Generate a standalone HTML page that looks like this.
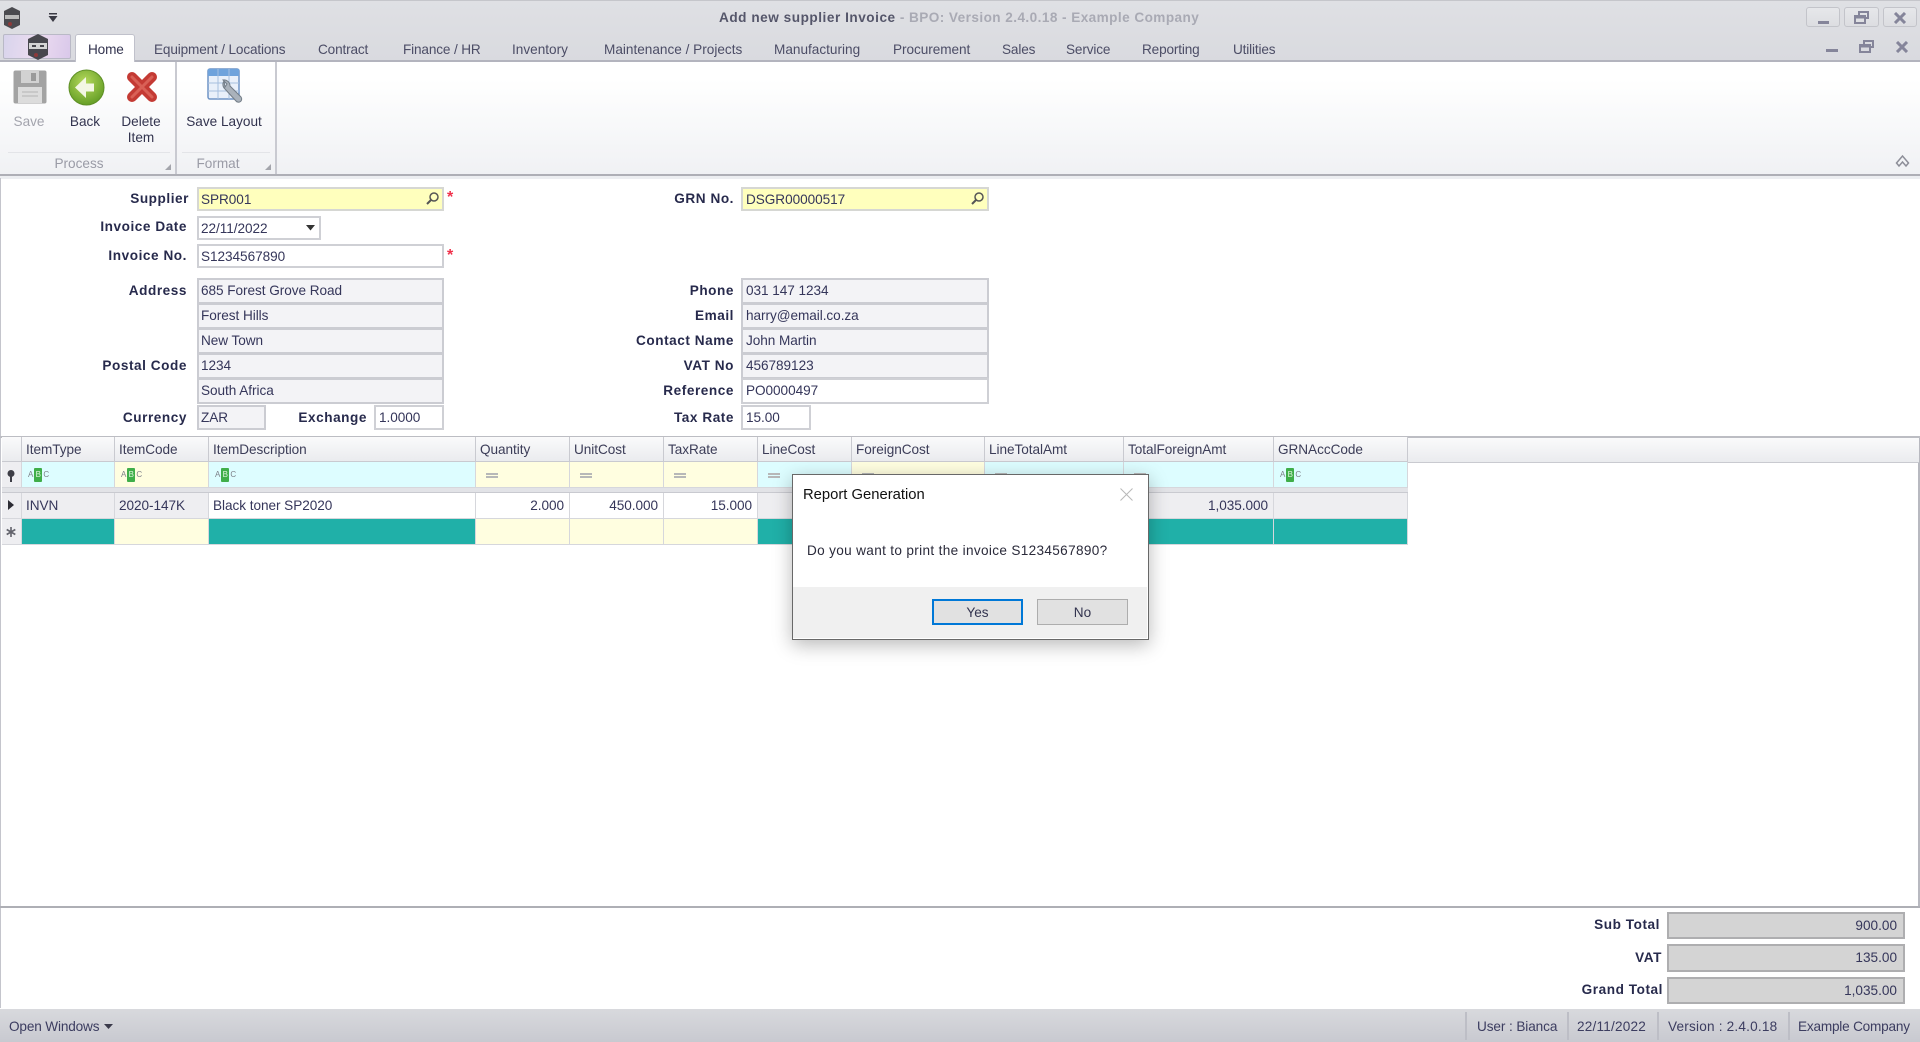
<!DOCTYPE html>
<html><head><meta charset="utf-8"><title>Add new supplier Invoice</title>
<style>
*{box-sizing:border-box}
html,body{margin:0;padding:0;width:1920px;height:1042px;overflow:hidden;background:#fff}
body{font-family:"Liberation Sans",sans-serif;font-size:13.6px;color:#33344f}
#root{position:absolute;left:0;top:0;width:1920px;height:1042px;overflow:hidden;filter:blur(.3px)}
.a{position:absolute}
.t{position:absolute;height:20px;line-height:20px;white-space:nowrap}
.c{transform:translateX(-50%)}
.tab{top:40px;color:#4c4d66;font-size:13.6px;letter-spacing:-.15px}
.lb{font-weight:bold;color:#272a4c;text-align:right;width:170px;letter-spacing:.55px;margin-top:1px}
.box{position:absolute;border:2px solid #cfd0d5;background:#fff;line-height:22px;padding-left:2px;white-space:nowrap;color:#35365a;letter-spacing:-.05px}
.ro{background:#f3f3f6;border-color:#cbccd2}
.y{background:#ffffbd;border-color:#d6d7d3}
.tot{position:absolute;left:1667px;width:238px;background:#d4d4d4;border:2px solid #aeaeb0;text-align:right;padding-right:6px;line-height:24px;color:#35365a}
table{position:absolute;left:2px;top:437px;border-collapse:separate;border-spacing:0;table-layout:fixed;width:1406px}
td{padding:0 4px;border-right:1.5px solid #d6d7dc;border-bottom:1.5px solid #d6d7dc;white-space:nowrap;overflow:hidden;color:#35365a}
tr.h td{height:25px;background:linear-gradient(#fafafb,#eaebee);color:#3c3d58;border-bottom-color:#c9cad0;border-right-color:#c9cad0;letter-spacing:-.05px}
tr.f td{height:26px}
tr.r td{height:26px;letter-spacing:-.05px}
.cy{background:#ddfdff}.ye{background:#fffee0}.gr{background:#eeeef1}.wh{background:#fff}.te{background:#20b0a8}
.n{text-align:right;padding-right:5px}
.abc{font-size:8px;color:#7d8088;letter-spacing:0;display:inline-block;line-height:14px;vertical-align:middle;margin-left:2px}
.abc b{display:inline-block;background:#3fae49;color:#dff5df;width:8px;height:14px;text-align:center;font-weight:normal;margin:0 1px;border-radius:1px}
.eq{display:inline-block;width:12px;height:5px;border-top:2px solid #b7b8b8;border-bottom:2px solid #b7b8b8;margin-left:6px;vertical-align:middle}
.wb{position:absolute;top:7px;height:20px;border:1.5px solid #c3c4ca;border-radius:3px;background:linear-gradient(#e6e7ea,#dcdde1)}
.sep{position:absolute;top:1012px;width:1.5px;height:28px;background:#bdbec6}
</style></head>
<body><div id="root">

<!-- title + tab strip -->
<div class="a" style="left:0;top:0;width:1920px;height:62px;background:linear-gradient(#dfe0e4,#d9dadf);border-top:1px solid #c5c6cb;border-bottom:2px solid #b3b4be"></div>

<svg class="a" style="left:2px;top:6px" width="20" height="24" viewBox="0 0 20 24"><path d="M10 1l8 4v14l-8 4-8-4V5z" fill="#4b4b50"/><path d="M3 9h14v4H3z" fill="#bbb"/><circle cx="8" cy="18" r="2" fill="#8d3a3a"/></svg>
<svg class="a" style="left:48px;top:12px" width="10" height="11" viewBox="0 0 10 11"><path d="M1 1h8v1.500H1z" fill="#3a3a44"/><path d="M0.500 4h9L5 10z" fill="#3a3a44"/></svg>

<div class="t" style="left:719px;top:8px;font-weight:bold;color:#55566a;font-size:13.6px;letter-spacing:.53px">Add new supplier Invoice<span style="color:#a9aab4;letter-spacing:.43px"> - BPO: Version 2.4.0.18 - Example Company</span></div>

<div class="wb" style="left:1806px;width:34px"></div>
<div class="wb" style="left:1844px;width:35px"></div>
<div class="wb" style="left:1883px;width:34px"></div>
<div class="a" style="left:1818px;top:21px;width:11px;height:3px;background:#85859a"></div>
<svg class="a" style="left:1854px;top:11px" width="15" height="14" viewBox="0 0 15 14" fill="none" stroke="#85859a" stroke-width="2"><path d="M5 4V1h9v6h-3"/><path d="M1 5h10v7H1z"/><path d="M1 6h10" stroke-width="3"/></svg>
<svg class="a" style="left:1893px;top:12px" width="14" height="12" viewBox="0 0 14 12" fill="none" stroke="#85859a" stroke-width="3"><path d="M2 1l10 10M12 1L2 11"/></svg>
<div class="a" style="left:1826px;top:49px;width:12px;height:3px;background:#85859a"></div>
<svg class="a" style="left:1859px;top:40px" width="15" height="14" viewBox="0 0 15 14" fill="none" stroke="#85859a" stroke-width="2"><path d="M5 4V1h9v6h-3"/><path d="M1 5h10v7H1z"/><path d="M1 6h10" stroke-width="3"/></svg>
<svg class="a" style="left:1895px;top:41px" width="14" height="12" viewBox="0 0 14 12" fill="none" stroke="#85859a" stroke-width="3"><path d="M2 1l10 10M12 1L2 11"/></svg>

<!-- logo button -->
<div class="a" style="left:3px;top:34px;width:68px;height:25px;border:1px solid #b9b9c6;border-radius:2px;background:linear-gradient(100deg,#d8d4ec,#ecdcf0 50%,#d9c8ea)"></div>
<svg class="a" style="left:26px;top:33px" width="24" height="28" viewBox="0 0 24 28"><path d="M12 1l10 5v16l-10 5-10-5V6z" fill="#48484e"/><path d="M3 10h18v6H3z" fill="#d5d5d5"/><path d="M6 12h4v2H6zM14 12h4v2h-4z" fill="#48484e"/><circle cx="10" cy="22" r="2" fill="#8d3a3a"/></svg>

<!-- tabs -->
<div class="a" style="left:75px;top:34px;width:60px;height:29px;background:#fff;border:1.5px solid #c0c1cb;border-bottom:none;border-radius:3px 3px 0 0"></div>
<div class="t tab" style="left:88px;color:#33344f">Home</div>
<div class="t tab" style="left:154px">Equipment / Locations</div>
<div class="t tab" style="left:318px">Contract</div>
<div class="t tab" style="left:403px">Finance / HR</div>
<div class="t tab" style="left:512px;letter-spacing:0">Inventory</div>
<div class="t tab" style="left:604px;letter-spacing:0">Maintenance / Projects</div>
<div class="t tab" style="left:774px;letter-spacing:0">Manufacturing</div>
<div class="t tab" style="left:893px;letter-spacing:-.05px">Procurement</div>
<div class="t tab" style="left:1002px">Sales</div>
<div class="t tab" style="left:1066px">Service</div>
<div class="t tab" style="left:1142px">Reporting</div>
<div class="t tab" style="left:1233px">Utilities</div>

<!-- ribbon -->
<div class="a" style="left:0;top:62px;width:1920px;height:112px;background:linear-gradient(#fff 0,#fff 15%,#f0f1f4 100%)"></div>
<div class="a" style="left:0;top:173.500px;width:1920px;height:2px;background:#aeafb6"></div>
<div class="a" style="left:0;top:175.500px;width:1920px;height:3px;background:#eceef1"></div>
<div class="a" style="left:175px;top:62px;width:1.500px;height:112px;background:#c9cad1"></div>
<div class="a" style="left:275px;top:62px;width:1.500px;height:112px;background:#c9cad1"></div>
<div class="a" style="left:8px;top:152px;width:162px;height:1px;background:#e3e4e8"></div>
<div class="a" style="left:182px;top:152px;width:88px;height:1px;background:#e3e4e8"></div>

<svg class="a" style="left:13px;top:70px" width="34" height="34" viewBox="0 0 34 34"><rect x="0.500" y="0.500" width="33" height="33" rx="2" fill="#a3a3a3"/><rect x="8" y="1" width="18" height="12" fill="#d2d2d2"/><rect x="18" y="3" width="5" height="8" fill="#9a9a9a"/><rect x="5" y="17" width="24" height="16" fill="#dcdcdc"/><path d="M9 22h16M9 26h16" stroke="#b5b5b5"/></svg>
<svg class="a" style="left:68px;top:69px" width="37" height="37" viewBox="0 0 37 37"><defs><radialGradient id="g" cx=".45" cy=".35" r=".7"><stop offset="0" stop-color="#b6d95c"/><stop offset="1" stop-color="#5f9a22"/></radialGradient></defs><circle cx="18.500" cy="18.500" r="17.500" fill="url(#g)" stroke="#5e8f26"/><path d="M7 18.500L18 8v6.500h8v8h-8V29z" fill="#f3f7e3"/></svg>
<svg class="a" style="left:126px;top:71px" width="32" height="32" viewBox="0 0 32 32"><path d="M6 6l20 20M26 6L6 26" stroke="#c43a34" stroke-width="10" stroke-linecap="round"/><path d="M6 6l20 20M26 6L6 26" stroke="#e87a6e" stroke-width="3" stroke-linecap="round" opacity=".6"/></svg>
<svg class="a" style="left:206px;top:67px" width="38" height="38" viewBox="0 0 38 38"><rect x="2" y="2" width="31" height="30" rx="2" fill="#e9f0fa" stroke="#6f94c6" stroke-width="1.500"/><rect x="2" y="2" width="31" height="7" fill="#6fa3dc"/><path d="M2 16h31M2 24h31M12 2v30M23 2v30" stroke="#a6bfdf"/><path d="M18 14a6 6 0 0 0 1 8l11 12a3 3 0 0 0 5-4L24 19a6 6 0 0 0-7-6l4 4-2 3z" fill="#aab2bb" stroke="#737d87"/></svg>

<div class="t c" style="left:29px;top:112px;color:#a3a4ad">Save</div>
<div class="t c" style="left:85px;top:112px">Back</div>
<div class="t c" style="left:141px;top:112px">Delete</div>
<div class="t c" style="left:141px;top:128px">Item</div>
<div class="t c" style="left:224px;top:112px">Save Layout</div>
<div class="t c" style="left:79px;top:154px;color:#9a9ba6">Process</div>
<div class="t c" style="left:218px;top:154px;color:#9a9ba6">Format</div>
<svg class="a" style="left:165px;top:164px" width="6" height="6"><path d="M6 0v6H0z" fill="#a4a5ac"/></svg>
<svg class="a" style="left:265px;top:164px" width="6" height="6"><path d="M6 0v6H0z" fill="#a4a5ac"/></svg>
<svg class="a" style="left:1895px;top:154px" width="15" height="14" viewBox="0 0 15 14" fill="none" stroke="#8d8e98" stroke-width="1.500"><path d="M1.500 9L7.500 2l6 7-2.500 3-3.500-4-3.500 4z"/></svg>

<!-- left frame -->
<div class="a" style="left:0;top:178px;width:1px;height:830px;background:#c4c5cc"></div>
<div class="a" style="left:1918px;top:437px;width:1.500px;height:470px;background:#b8b9c0"></div>

<!-- form left -->
<div class="t lb" style="left:19px;top:188px">Supplier</div>
<div class="box y" style="left:197px;top:187px;width:247px;height:24px">SPR001</div>
<svg class="a" style="left:425px;top:191px" width="15" height="15" viewBox="0 0 15 15" fill="none" stroke="#555" stroke-width="1.500"><circle cx="9" cy="6" r="4"/><path d="M6 9l-4 4" stroke-width="2"/></svg>
<div class="a" style="left:447px;top:190px;color:#f0304a;font-weight:bold;font-size:16px;line-height:16px">*</div>

<div class="t lb" style="left:17px;top:216px">Invoice Date</div>
<div class="box" style="left:197px;top:216px;width:124px;height:24px">22/11/2022</div>
<svg class="a" style="left:306px;top:225px" width="10" height="6"><path d="M0 0h9L4.500 5.500z" fill="#333"/></svg>

<div class="t lb" style="left:17px;top:245px">Invoice No.</div>
<div class="box" style="left:197px;top:244px;width:247px;height:24px">S1234567890</div>
<div class="a" style="left:447px;top:248px;color:#f0304a;font-weight:bold;font-size:16px;line-height:16px">*</div>

<div class="t lb" style="left:17px;top:280px">Address</div>
<div class="box ro" style="left:197px;top:278px;width:247px;height:26px">685 Forest Grove Road</div>
<div class="box ro" style="left:197px;top:303px;width:247px;height:26px">Forest Hills</div>
<div class="box ro" style="left:197px;top:328px;width:247px;height:26px">New Town</div>
<div class="t lb" style="left:17px;top:355px">Postal Code</div>
<div class="box ro" style="left:197px;top:353px;width:247px;height:26px">1234</div>
<div class="box ro" style="left:197px;top:378px;width:247px;height:26px">South Africa</div>
<div class="t lb" style="left:17px;top:407px">Currency</div>
<div class="box ro" style="left:197px;top:405px;width:69px;height:25px">ZAR</div>
<div class="t lb" style="left:197px;top:407px">Exchange</div>
<div class="box" style="left:374px;top:405px;width:70px;height:25px;padding-left:3px">1.0000</div>

<!-- form right -->
<div class="t lb" style="left:564px;top:188px">GRN No.</div>
<div class="box y" style="left:741px;top:187px;width:248px;height:24px;padding-left:3px">DSGR00000517</div>
<svg class="a" style="left:970px;top:191px" width="15" height="15" viewBox="0 0 15 15" fill="none" stroke="#555" stroke-width="1.500"><circle cx="9" cy="6" r="4"/><path d="M6 9l-4 4" stroke-width="2"/></svg>
<div class="t lb" style="left:564px;top:280px">Phone</div>
<div class="box ro" style="left:741px;top:278px;width:248px;height:26px;padding-left:3px">031 147 1234</div>
<div class="t lb" style="left:564px;top:305px">Email</div>
<div class="box ro" style="left:741px;top:303px;width:248px;height:26px;padding-left:3px">harry@email.co.za</div>
<div class="t lb" style="left:564px;top:330px">Contact Name</div>
<div class="box ro" style="left:741px;top:328px;width:248px;height:26px;padding-left:3px">John Martin</div>
<div class="t lb" style="left:564px;top:355px">VAT No</div>
<div class="box ro" style="left:741px;top:353px;width:248px;height:26px;padding-left:3px">456789123</div>
<div class="t lb" style="left:564px;top:380px">Reference</div>
<div class="box" style="left:741px;top:378px;width:248px;height:26px;padding-left:3px">PO0000497</div>
<div class="t lb" style="left:564px;top:407px">Tax Rate</div>
<div class="box" style="left:741px;top:405px;width:70px;height:25px;padding-left:3px">15.00</div>

<!-- grid -->
<div class="a" style="left:0;top:436px;width:1920px;height:2px;background:#bcbdc3"></div>
<div class="a" style="left:1407px;top:438px;width:512px;height:25px;background:linear-gradient(#fafafb,#eaebee);border-bottom:1.500px solid #c9cad0"></div>
<table>
<colgroup><col style="width:20px"><col style="width:93px"><col style="width:94px"><col style="width:267px"><col style="width:94px"><col style="width:94px"><col style="width:94px"><col style="width:94px"><col style="width:133px"><col style="width:139px"><col style="width:150px"><col style="width:134px"></colgroup>
<tr class="h"><td></td><td>ItemType</td><td>ItemCode</td><td>ItemDescription</td><td>Quantity</td><td>UnitCost</td><td>TaxRate</td><td>LineCost</td><td>ForeignCost</td><td>LineTotalAmt</td><td>TotalForeignAmt</td><td>GRNAccCode</td></tr>
<tr class="f"><td class="gr"></td>
<td class="cy"><span class="abc">A<b>B</b>C</span></td>
<td class="ye"><span class="abc">A<b>B</b>C</span></td>
<td class="cy"><span class="abc">A<b>B</b>C</span></td>
<td class="ye"><i class="eq"></i></td><td class="ye"><i class="eq"></i></td><td class="ye"><i class="eq"></i></td><td class="cy"><i class="eq"></i></td><td class="ye"><i class="eq"></i></td><td class="cy"><i class="eq"></i></td><td class="cy"><i class="eq"></i></td>
<td class="cy"><span class="abc">A<b>B</b>C</span></td></tr>
<tr><td colspan="12" style="height:5px;padding:0;background:#e2e3e7;border-right:none;border-bottom:1.500px solid #c9cad0"></td></tr>
<tr class="r"><td class="gr"></td><td class="gr">INVN</td><td class="gr">2020-147K</td><td class="wh">Black toner SP2020</td><td class="wh n">2.000</td><td class="wh n">450.000</td><td class="wh n">15.000</td><td class="gr"></td><td class="gr"></td><td class="gr"></td><td class="gr n">1,035.000</td><td class="gr"></td></tr>
<tr class="r"><td class="gr"></td><td class="te"></td><td class="ye"></td><td class="te"></td><td class="ye"></td><td class="ye"></td><td class="ye"></td><td class="te"></td><td class="ye"></td><td class="te"></td><td class="te"></td><td class="te"></td></tr>
</table>
<svg class="a" style="left:6px;top:470px" width="10" height="13" viewBox="0 0 10 13"><circle cx="5" cy="3.500" r="3.500" fill="#3e3e46"/><path d="M4 5h2v7H4z" fill="#3e3e46"/></svg>
<svg class="a" style="left:8px;top:500px" width="6" height="10"><path d="M0 0l6 5-6 5z" fill="#2c2c34"/></svg>
<svg class="a" style="left:5px;top:526px" width="12" height="12" viewBox="0 0 12 12" stroke="#62636c" stroke-width="1.600"><path d="M6 1v10M1.700 3.500l8.600 5M10.300 3.500l-8.600 5"/></svg>

<div class="a" style="left:0;top:906px;width:1920px;height:2px;background:#aeafb5"></div>

<!-- totals -->
<div class="t lb" style="left:1490px;top:914px">Sub Total</div>
<div class="tot" style="top:912px;height:27px">900.00</div>
<div class="t lb" style="left:1492px;top:947px">VAT</div>
<div class="tot" style="top:944px;height:28px">135.00</div>
<div class="t lb" style="left:1493px;top:979px">Grand Total</div>
<div class="tot" style="top:977px;height:27px">1,035.00</div>

<!-- status bar -->
<div class="a" style="left:0;top:1009px;width:1920px;height:33px;background:linear-gradient(#d8d9dd,#c8c9d0)"></div>
<div class="t" style="left:9px;top:1017px;color:#3c3d60;letter-spacing:-.15px">Open Windows</div>
<svg class="a" style="left:104px;top:1024px" width="9" height="6"><path d="M0 0h9L4.500 5z" fill="#3a3a4a"/></svg>
<div class="sep" style="left:1465px"></div>
<div class="t" style="left:1477px;top:1017px;color:#3c3d60;letter-spacing:-.1px">User : Bianca</div>
<div class="sep" style="left:1567px"></div>
<div class="t" style="left:1577px;top:1017px;color:#3c3d60;letter-spacing:.2px">22/11/2022</div>
<div class="sep" style="left:1657px"></div>
<div class="t" style="left:1668px;top:1017px;color:#3c3d60;letter-spacing:.2px">Version : 2.4.0.18</div>
<div class="sep" style="left:1788px"></div>
<div class="t" style="left:1798px;top:1017px;color:#3c3d60;letter-spacing:-.2px">Example Company</div>

<!-- dialog -->
<div class="a" style="left:792px;top:474px;width:357px;height:166px;background:#fff;border:1.500px solid #686868;box-shadow:0 5px 18px rgba(0,0,0,.28)">
  <div class="a" style="left:0;top:112px;width:354px;height:51px;background:#f0f0f0"></div>
</div>
<div class="t" style="left:803px;top:485px;color:#111;font-size:14.8px">Report Generation</div>
<svg class="a" style="left:1120px;top:488px" width="13" height="13" viewBox="0 0 13 13" stroke="#b8b8b8" stroke-width="1"><path d="M.5.500l12 12M12.500.500l-12 12"/></svg>
<div class="t" style="left:807px;top:541px;color:#2a2a3a;font-size:13.6px;letter-spacing:.33px">Do you want to print the invoice S1234567890?</div>
<div class="a" style="left:932px;top:599px;width:91px;height:26px;background:#e1e1e1;border:2px solid #0078d7;text-align:center;line-height:24px;color:#33344f">Yes</div>
<div class="a" style="left:1037px;top:599px;width:91px;height:26px;background:#e1e1e1;border:1.500px solid #adadad;text-align:center;line-height:25px;color:#33344f">No</div>

</div></body></html>
